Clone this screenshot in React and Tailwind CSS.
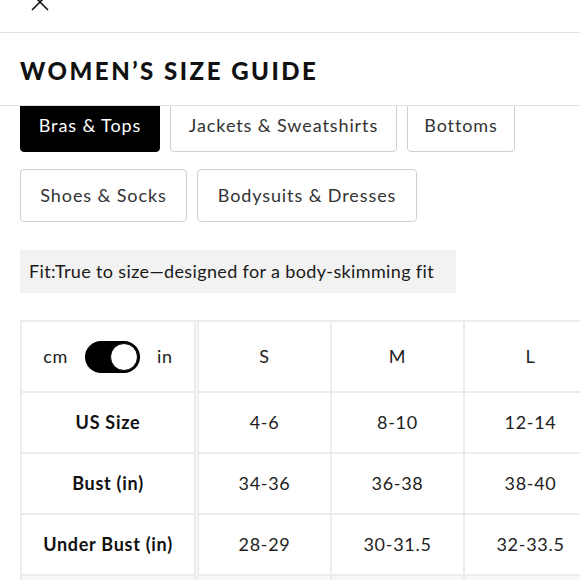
import React, { useState } from 'react';

const categories = [
  [
    { name: 'Bras & Tops', w: 'w-[140px]' },
    { name: 'Jackets & Sweatshirts', w: 'w-[227px]' },
    { name: 'Bottoms', w: 'w-[108px]' },
  ],
  [
    { name: 'Shoes & Socks', w: 'w-[167px]' },
    { name: 'Bodysuits & Dresses', w: 'w-[220px]' },
  ],
];

const sizes = ['S', 'M', 'L', 'XL'];

const rows = [
  { label: 'US Size', values: ['4-6', '8-10', '12-14', '16-18'] },
  { label: 'Bust (in)', values: ['34-36', '36-38', '38-40', '40-42'] },
  { label: 'Under Bust (in)', values: ['28-29', '30-31.5', '32-33.5', '34-35.5'] },
  { label: 'Waist (in)', values: ['27-29', '30-32', '33-35', '36-38'] },
];

const App = () => {
  const [active, setActive] = useState('Bras & Tops');
  const [inches, setInches] = useState(true);

  return (
    <div
      className="w-[580px] h-[580px] overflow-hidden bg-white text-[#222]"
      style={{ fontFamily: 'Lato, "Open Sans", sans-serif' }}
    >
      {/* Header */}
      <div className="h-[33px] border-b border-[#e2e2e2] flex items-start">
        <svg
          className="ml-[31px] -mt-[7px]"
          width="18"
          height="18"
          viewBox="0 0 18 18"
          fill="none"
          stroke="#111"
          strokeWidth="1.6"
        >
          <path d="M1 1l16 16M17 1L1 17" />
        </svg>
      </div>
      <div className="h-[73px] border-b border-[#e2e2e2] flex items-center pl-5 pt-[4px]">
        <h1
          className="text-[24px] font-black tracking-[0.105em] text-[#111]"
          style={{ fontFamily: 'Lato, sans-serif' }}
        >
          WOMEN’S SIZE GUIDE
        </h1>
      </div>

      {/* Scrolled content */}
      <div className="h-[474px] overflow-hidden">
        <div className="-mt-[7px] px-5 flex flex-col">
          <div className="flex flex-col gap-[17px]">
            {categories.map((row, i) => (
              <div key={i} className="flex gap-[10px]">
                {row.map((c) => (
                  <button
                    key={c.name}
                    onClick={() => setActive(c.name)}
                    className={
                      c.w +
                      ' h-[53px] rounded-[4px] text-[18px] tracking-[0.05em] text-center ' +
                      (active === c.name
                        ? 'bg-black text-white border border-black'
                        : 'bg-white text-[#333] border border-[#cfcfcf]')
                    }
                  >
                    {c.name}
                  </button>
                ))}
              </div>
            ))}
          </div>

          <div className="mt-[28px] w-[436px] h-[43px] bg-[#f2f2f2] flex items-center pl-[9px] text-[18px] tracking-[0.02em] text-[#1a1a1a]">
            Fit:True to size—designed for a body-skimming fit
          </div>
        </div>

        {/* Table */}
        <div className="ml-5 mt-[27px] w-max border-t-2 border-[#ececec] text-[18px] tracking-[0.04em]">
          <div className="flex h-[71px]">
            <div className="w-[176px] border-l-2 border-r-2 border-b-2 border-[#ececec] flex items-center justify-center gap-[17px]">
              <span>cm</span>
              <button
                onClick={() => setInches(!inches)}
                className={
                  'w-[55px] h-[32px] rounded-full bg-black flex items-center px-[2px] ' +
                  (inches ? 'justify-end' : 'justify-start')
                }
              >
                <span className="w-[28px] h-[28px] rounded-full bg-white border border-black" />
              </button>
              <span>in</span>
            </div>
            {sizes.map((s, i) => (
              <div
                key={s}
                className={
                  'flex items-center justify-center border-r-2 border-b-2 border-[#ececec] ' +
                  (i === 0 ? 'w-[135px] ml-[1px] border-l-2' : 'w-[133px]')
                }
              >
                {s}
              </div>
            ))}
          </div>
          {rows.map((r, ri) => (
            <div key={r.label} className={'flex h-[61px] ' + (ri === 3 ? 'bg-[#f7f7f7]' : '')}>
              <div className="w-[176px] border-l-2 border-r-2 border-b-2 border-[#ececec] flex items-center justify-center font-bold text-[#111]">
                {r.label}
              </div>
              {r.values.map((v, i) => (
                <div
                  key={i}
                  className={
                    'flex items-center justify-center border-r-2 border-b-2 border-[#ececec] ' +
                    (i === 0 ? 'w-[135px] ml-[1px] border-l-2' : 'w-[133px]')
                  }
                >
                  {v}
                </div>
              ))}
            </div>
          ))}
        </div>
      </div>
    </div>
  );
};

export default App;
